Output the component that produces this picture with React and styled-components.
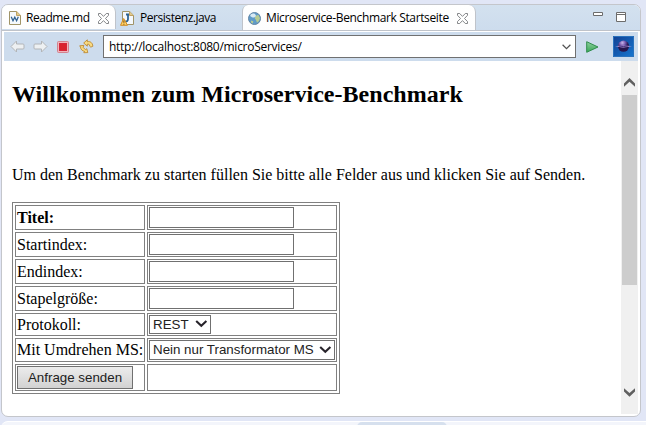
import React from "react";
import styled, { createGlobalStyle } from "styled-components";

const Global = createGlobalStyle`
  * { box-sizing: border-box; }
  body { margin: 0; background: #e1e6f6; overflow: hidden; }
`;

const Workbench = styled.div`
  width: 646px;
  height: 425px;
  padding: 4px 0 0 1px;
  overflow: hidden;
  background: #e1e6f6;
`;

const EditorPane = styled.section`
  display: flex;
  flex-direction: column;
  width: 640px;
  height: 413px;
  border: 1px solid #c4c6cb;
  border-radius: 7px;
  background: #fff;
  overflow: hidden;
`;

const TabBar = styled.div`
  display: flex;
  flex: 0 0 25px;
  background: linear-gradient(#d3e1ef, #cddced);
  border-bottom: 1px solid #bfc3ca;
`;

const Tab = styled.div`
  display: flex;
  align-items: center;
  width: ${(p) => p.$width}px;
  height: ${(p) => (p.$active ? 25 : 24)}px;
  padding-top: ${(p) => (p.$active ? 1 : 2)}px;
  padding-left: ${(p) => p.$pad}px;
  background: ${(p) => (p.$light ? "linear-gradient(#fff, #fdfdfe)" : "transparent")};
  border-right: ${(p) => (p.$light ? "1px solid #bfc3ca" : "0")};
  border-left: ${(p) => (p.$active ? "1px solid #bfc3ca" : "0")};
  border-radius: ${(p) => (p.$active ? "6px 7px 0 0" : p.$light ? "0 7px 0 0" : "0")};
  svg { flex: none; }
`;

const TabLabel = styled.span`
  font: 12px/16px "Open Sans", "Noto Sans", sans-serif;
  letter-spacing: ${(p) => p.$track}px;
  color: #000;
  white-space: nowrap;
  width: ${(p) => p.$width}px;
  margin-left: ${(p) => p.$gap}px;
`;

const WindowButtons = styled.div`
  display: flex;
  align-items: flex-start;
  gap: 13px;
  margin-left: auto;
  padding: 7px 14px 0 0;
`;

const Toolbar = styled.div`
  display: flex;
  align-items: center;
  flex: 0 0 29px;
  margin: 2px 2px 0 2px;
  margin-top: 1px;
  padding: 0 4px 0 6px;
  background: #cddced;
`;

const ToolButton = styled.span`
  display: flex;
  width: ${(p) => p.$width || 24}px;
  padding-left: ${(p) => p.$pad || 0}px;
  flex: none;
`;

const AddressBox = styled.div`
  display: flex;
  flex: none;
  align-items: center;
  justify-content: space-between;
  width: 473px;
  height: 23px;
  padding: 0 4px 0 5px;
  background: #fff;
  border: 1px solid #707070;
`;

const Address = styled.span`
  font: 12px/16px "Open Sans", "Noto Sans", sans-serif;
  letter-spacing: -0.27px;
  white-space: nowrap;
`;

const Browser = styled.div`
  display: flex;
  flex: 0 0 353px;
  margin-right: 2px;
`;

const Page = styled.main`
  flex: 1;
  padding: 19px 0 0 10px;
  font: 16px/18px "Liberation Serif", serif;
  color: #000;
`;

const Heading = styled.h2`
  margin: 0 0 53px;
  font-size: 24px;
  line-height: 28px;
  letter-spacing: 0.03px;
  white-space: nowrap;
`;

const Intro = styled.p`
  margin: 0 0 18px;
  height: 18px;
  padding-top: 5px;
  white-space: nowrap;
`;

const FormTable = styled.div`
  display: grid;
  grid-template-columns: 130px 190px;
  grid-template-rows: repeat(4, 25px) 23px 24px 27px;
  gap: 2px;
  width: 328px;
  padding: 2px;
  margin-top: 23px;
  border: 1px solid #808080;
`;

const Cell = styled.div`
  display: flex;
  align-items: center;
  padding: 1px;
  border: 1px solid #808080;
  white-space: nowrap;
  font-weight: ${(p) => (p.$bold ? "bold" : "normal")};
`;

const TextInput = styled.input`
  width: 145px;
  height: 21px;
  padding: 1px;
  background: #fff;
  border: 1px solid #707070;
  border-radius: 0;
  outline: 0;
`;

const SelectBox = styled.div`
  display: flex;
  align-items: center;
  justify-content: space-between;
  width: ${(p) => p.$width}px;
  height: 100%;
  padding: 0 2px 0 3px;
  border: 1px solid #707070;
  font: 13.33px/16px "Liberation Sans", Arial, sans-serif;
  color: #222;
`;

const SubmitButton = styled.button`
  width: 116px;
  height: 23px;
  padding: 0;
  border: 1px solid #707070;
  border-radius: 0;
  background: linear-gradient(#ececec, #d2d2d2);
  color: #222;
  font: 13.33px/16px "Liberation Sans", Arial, sans-serif;
`;

const Scrollbar = styled.div`
  display: flex;
  flex-direction: column;
  align-items: center;
  width: 17px;
  background: #f0f0f0;
`;

const ScrollThumb = styled.div`
  flex: none;
  width: 15px;
  height: 190px;
  margin-top: 8px;
  background: #cdcdcd;
`;

const ScrollArrow = styled.svg`
  flex: none;
  margin-top: ${(p) => p.$top}px;
`;

const LowerPane = styled.div`
  height: 10px;
  width: 650px;
  margin-top: 4px;
  padding-left: 356px;
  border-radius: 7px 0 0 0;
  border-top: 1px solid #fff;
  background: #f3f5fb;
`;

const LowerTab = styled.div`
  width: 90px;
  height: 10px;
  border-radius: 5px 5px 0 0;
  background: #d6e0ee;
`;

const CloseIcon = () => (
  <svg width="11" height="11" viewBox="0 0 11 11" fill="#fff" stroke="#77797d" strokeWidth=".9">
    <path d="M.5.5h2.2l2.8 2.9L8.3.5h2.2v1.8L7.5 5.5l3 3.1v1.9H8.3L5.5 7.6l-2.8 2.9H.5V8.6l3-3.1-3-3.2z" />
  </svg>
);

const MarkdownIcon = () => (
  <svg width="12" height="14" viewBox="0 0 12 14">
    <path d="M.5.5h7.2l3.8 3.8v9.2H.5z" fill="#f5f9fd" stroke="#a09468" />
    <path d="M7.5.5v4h4" fill="#e2c98b" stroke="#c0a160" />
    <path d="M2.2 5.7L4 9.8l1.8-3.6 1.8 3.6 1.7-4.1" fill="none" stroke="#336494" strokeWidth="1.3" />
  </svg>
);

const JavaIcon = () => (
  <svg width="14" height="15" viewBox="0 0 14 15">
    <path d="M2.5.5h7.2l3.8 3.8v9.2h-11z" fill="#f4f8fd" stroke="#a09468" />
    <path d="M9.5.5v4h4" fill="#e2c98b" stroke="#c0a160" />
    <path d="M6 3.5h3M8 3.5V8c0 2-1 2.6-2.8 2.5" fill="none" stroke="#2e6494" strokeWidth="1.8" />
    <path d="M3.7 7.5L.5 14.3h7z" fill="#ffd368" stroke="#d38b21" strokeLinejoin="round" />
    <path d="M3.9 9.5v2.3M3.9 12.7v1" stroke="#744712" />
  </svg>
);

const GlobeIcon = () => (
  <svg width="13" height="13" viewBox="0 0 13 13">
    <circle cx="6.5" cy="6.5" r="6" fill="#609bc9" stroke="#6285a4" />
    <path d="M7.5 4l2.8-1.2L12 6l-1 3-2 1.8L8 8 6.8 6.5zM3 8.5l2.3.7-.4 2.3L3 10.5z" fill="#b7cb91" />
    <path d="M3 2.3C5 1 7.3 1.6 7.8 3.3S5.8 6 4 5.3 1.6 3.5 3 2.3z" fill="#eff8fb" opacity=".85" />
  </svg>
);

const ArrowIcon = ({ forward }) => (
  <svg width="15" height="13" viewBox="0 0 15 13">
    <path
      d={forward ? "M14 6.5L8.5 1v3H2Q1 4 1 5v3q0 1 1 1h6.5v3z" : "M1 6.5L6.5 1v3H13q1 0 1 1v3q0 1-1 1H6.5v3z"}
      fill="#edf0f2" stroke="#b2b5b8" strokeLinejoin="round"
    />
  </svg>
);

const StopIcon = () => (
  <svg width="12" height="12" viewBox="0 0 12 12">
    <rect x=".5" y=".5" width="11" height="11" rx="1" fill="#f0b5bb" stroke="#d2828e" />
    <rect x="2.5" y="2.5" width="7" height="7" fill="#d9232e" stroke="#d52539" />
  </svg>
);

const RefreshIcon = () => (
  <svg width="15" height="15" viewBox="0 0 15 15" fill="#f9dc83" stroke="#b98025" strokeWidth=".8" strokeLinejoin="round">
    <path d="M4.7 4L8.3.8v1.9c3-.7 5.4 1.2 5.5 4.6l-2 .8-1.2-1c.2-1.4-.7-2.2-2.3-1.9v2z" />
    <path d="M.7 6.8l4.2-.4-.8 1.9 2.3 2.4 1.4-1 1 3.9-4 .1.8-1.3C3.1 11.8 1.7 10.4 1.5 8z" />
  </svg>
);

const ChevronDown = ({ bold }) => (
  <svg width={bold ? 13 : 9} height={bold ? 9 : 6} viewBox={bold ? "0 0 13 9" : "0 0 9 6"} fill="none">
    {bold
      ? <path d="M1.2 1l5.1 4.8L11.4 1" stroke="#28242b" strokeWidth="2.1" />
      : <path d="M.6.8l3.9 3.8L8.4.8" stroke="#505050" strokeWidth="1.2" />}
  </svg>
);

const PlayIcon = () => (
  <svg width="13" height="12" viewBox="0 0 13 12">
    <defs>
      <linearGradient id="play" x2="0" y2="1"><stop stopColor="#8fd0a0" /><stop offset="1" stopColor="#37a756" /></linearGradient>
    </defs>
    <path d="M.7.7L12 6 .7 11.3z" fill="url(#play)" stroke="#2f8d4c" strokeLinejoin="round" />
  </svg>
);

const EclipseIcon = () => (
  <svg width="21" height="21" viewBox="0 0 21 21">
    <defs>
      <linearGradient id="sky" x2="1" y2="1"><stop stopColor="#123f91" /><stop offset="1" stopColor="#1677d0" /></linearGradient>
      <radialGradient id="planet" cx=".4" cy=".2"><stop stopColor="#c8b8ea" /><stop offset=".5" stopColor="#7a5bb0" /><stop offset="1" stopColor="#26164e" /></radialGradient>
    </defs>
    <path d="M0 0h21v21H0z" fill="url(#sky)" />
    <path d="M.5 20.5V.5h20v20z" fill="none" stroke="#2a72bd" />
    <circle cx="10.5" cy="10.2" r="5.6" fill="url(#planet)" />
    <path d="M2 10.3q8.5-1.6 17 0-8.5 2.2-17 0z" fill="#a995d2" />
    <path d="M6 10q4.5 1 9 0" fill="none" stroke="#46307a" />
  </svg>
);

const fields = ["Titel:", "Startindex:", "Endindex:", "Stapelgröße:"];

export default function App() {
  return (
    <>
      <Global />
      <Workbench>
        <EditorPane>
          <TabBar>
            <Tab $light $width={114} $pad={7}>
              <MarkdownIcon />
              <TabLabel $gap={5} $width={72} $track={-0.45}>Readme.md</TabLabel>
              <CloseIcon />
            </Tab>
            <Tab $width={126} $pad={4}>
              <JavaIcon />
              <TabLabel $gap={6} $width={80} $track={-0.45}>Persistenz.java</TabLabel>
            </Tab>
            <Tab $light $active $width={234} $pad={5}>
              <GlobeIcon />
              <TabLabel $gap={5} $width={191} $track={-0.36}>Microservice-Benchmark Startseite</TabLabel>
              <CloseIcon />
            </Tab>
            <WindowButtons>
              <svg width="10" height="4" viewBox="0 0 10 4"><path d="M.5.5h9v3h-9z" fill="#fff" stroke="#6c6c6c" /></svg>
              <svg width="10" height="10" viewBox="0 0 10 10"><path d="M.5.5h9v9h-9zM.5 2.5h9" fill="#fff" stroke="#6c6c6c" /></svg>
            </WindowButtons>
          </TabBar>
          <Toolbar>
            <ToolButton $width={23}><ArrowIcon /></ToolButton>
            <ToolButton><ArrowIcon forward /></ToolButton>
            <ToolButton $width={22}><StopIcon /></ToolButton>
            <ToolButton><RefreshIcon /></ToolButton>
            <AddressBox>
              <Address>http://localhost:8080/microServices/</Address>
              <ChevronDown />
            </AddressBox>
            <ToolButton $width={37} $pad={10}><PlayIcon /></ToolButton>
            <EclipseIcon />
          </Toolbar>
          <Browser>
            <Page>
              <Heading>Willkommen zum Microservice-Benchmark</Heading>
              <Intro>Um den Benchmark zu starten füllen Sie bitte alle Felder aus und klicken Sie auf Senden.</Intro>
              <FormTable>
                {fields.map((name, i) => (
                  <React.Fragment key={name}>
                    <Cell $bold={i === 0}>{name}</Cell>
                    <Cell><TextInput aria-label={name} /></Cell>
                  </React.Fragment>
                ))}
                <Cell>Protokoll:</Cell>
                <Cell><SelectBox $width={62}>REST<ChevronDown bold /></SelectBox></Cell>
                <Cell>Mit Umdrehen MS:</Cell>
                <Cell><SelectBox $width={186}>Nein nur Transformator MS<ChevronDown bold /></SelectBox></Cell>
                <Cell><SubmitButton>Anfrage senden</SubmitButton></Cell>
                <Cell />
              </FormTable>
            </Page>
            <Scrollbar>
              <ScrollArrow $top={17} width="11" height="9" viewBox="0 0 11 9"><path d="M0 5.5L5.5 0 11 5.5v3.3L5.5 3.8 0 8.8z" fill="#606060" /></ScrollArrow>
              <ScrollThumb />
              <ScrollArrow $top={103} width="11" height="9" viewBox="0 0 11 9"><path d="M0 .2L5.5 5 11 .2v3.3L5.5 8.8 0 3.5z" fill="#606060" /></ScrollArrow>
            </Scrollbar>
          </Browser>
        </EditorPane>
        <LowerPane><LowerTab /></LowerPane>
      </Workbench>
    </>
  );
}
